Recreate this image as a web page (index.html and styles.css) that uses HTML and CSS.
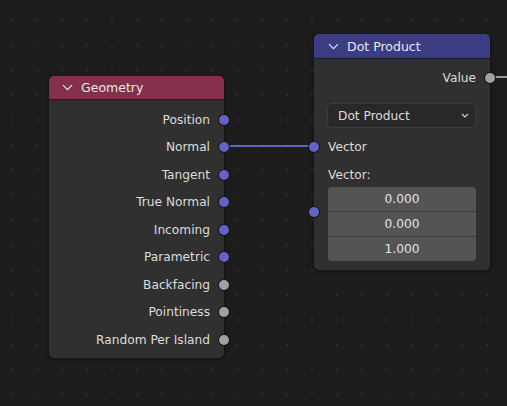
FILE: index.html
```html
<!DOCTYPE html>
<html>
<head>
<meta charset="utf-8">
<link rel="stylesheet" href="styles.css">
</head>
<body>
<div class="canvas">
  <svg class="links" width="507" height="406" viewBox="0 0 507 406">
    <line x1="224" y1="146" x2="314" y2="146" stroke="#6363c7" stroke-width="2"/>
    <line x1="490" y1="77" x2="507" y2="77" stroke="#9a9a9a" stroke-width="2"/>
  </svg>

  <div class="node node-geometry">
    <div class="node-header header-input">
      <svg class="chev" width="11" height="7" viewBox="0 0 11 7"><path d="M1 1.2 L5.5 5.7 L10 1.2" fill="none" stroke="#e6e6e6" stroke-width="1.2"/></svg>
      <span>Geometry</span>
    </div>
    <div class="node-body geo-body">
      <div class="out-row"><span>Position</span><i class="sock sock-vec"></i></div>
      <div class="out-row"><span>Normal</span><i class="sock sock-vec"></i></div>
      <div class="out-row"><span>Tangent</span><i class="sock sock-vec"></i></div>
      <div class="out-row"><span>True Normal</span><i class="sock sock-vec"></i></div>
      <div class="out-row"><span>Incoming</span><i class="sock sock-vec"></i></div>
      <div class="out-row"><span>Parametric</span><i class="sock sock-vec"></i></div>
      <div class="out-row"><span>Backfacing</span><i class="sock sock-float"></i></div>
      <div class="out-row"><span>Pointiness</span><i class="sock sock-float"></i></div>
      <div class="out-row"><span>Random Per Island</span><i class="sock sock-float"></i></div>
    </div>
  </div>

  <div class="node node-dot">
    <div class="node-header header-vector">
      <svg class="chev" width="11" height="7" viewBox="0 0 11 7"><path d="M1 1.2 L5.5 5.7 L10 1.2" fill="none" stroke="#e6e6e6" stroke-width="1.2"/></svg>
      <span>Dot Product</span>
    </div>
    <div class="node-body dot-body">
      <div class="out-row value-row"><span>Value</span><i class="sock sock-float"></i></div>
      <div class="dropdown">
        <span>Dot Product</span>
        <svg width="8" height="5" viewBox="0 0 8 5"><path d="M1 1 L4 4 L7 1" fill="none" stroke="#d0d0d0" stroke-width="1.2"/></svg>
      </div>
      <div class="in-row"><i class="sock sock-vec"></i><span>Vector</span></div>
      <div class="label-row">Vector:</div>
      <div class="vec-field">
        <i class="sock sock-vec field-sock"></i>
        <div class="vec-cell">0.000</div>
        <div class="vec-cell">0.000</div>
        <div class="vec-cell">1.000</div>
      </div>
    </div>
  </div>
</div>
</body>
</html>
```
FILE: styles.css
```css
html, body {
  margin: 0;
  padding: 0;
}
body {
  width: 507px;
  height: 406px;
  overflow: hidden;
  background-color: #1d1d1d;
  font-family: "DejaVu Sans", sans-serif;
  font-size: 12.2px;
  color: #dcdcdc;
}
.canvas {
  position: relative;
  width: 507px;
  height: 406px;
  background-image: radial-gradient(circle at 1px 1px, #2d2d2d 1.3px, transparent 1.5px);
  background-size: 25px 25px;
  background-position: 11px 19px;
}
.links {
  position: absolute;
  left: 0;
  top: 0;
}
.node {
  position: absolute;
  background: #303030;
  border-radius: 5px;
  box-shadow: 0 0 0 1px #161616, 0 1px 6px rgba(0, 0, 0, 0.45);
  display: flex;
  flex-direction: column;
}
.node-geometry {
  left: 49px;
  top: 76px;
  width: 175px;
  height: 282px;
}
.node-dot {
  left: 314px;
  top: 34px;
  width: 176px;
  height: 236px;
}
.node-header {
  display: flex;
  align-items: center;
  border-radius: 5px 5px 0 0;
  border-bottom: 1px solid #1c1c1c;
  color: #e8e8e8;
  font-size: 12.5px;
  flex: none;
}
.header-input {
  background: #85304b;
  height: 23px;
}
.header-vector {
  background: #3c3c85;
  height: 24px;
}
.chev {
  margin-left: 13px;
  margin-right: 8px;
  flex: none;
}
.node-dot .chev {
  margin-left: 14px;
}
.node-body {
  position: relative;
  display: flex;
  flex-direction: column;
}
.geo-body {
  padding-top: 6px;
}
.out-row {
  position: relative;
  height: 27.5px;
  display: flex;
  align-items: center;
  justify-content: flex-end;
  padding-right: 14px;
}
.sock {
  position: absolute;
  width: 10px;
  height: 10px;
  border-radius: 50%;
  box-shadow: 0 0 0 1px #141414;
  top: 50%;
  transform: translate(-50%, -50%);
}
.out-row .sock {
  left: 100%;
}
.sock-vec {
  background: #6363c7;
}
.sock-float {
  background: #a1a1a1;
}
.dot-body {
  padding-top: 7px;
}
.value-row {
  height: 24px;
}
.dropdown {
  margin: 13px 14px 0 13px;
  height: 25px;
  box-sizing: border-box;
  background: #282828;
  border: 1px solid #3a3a3a;
  border-radius: 4px;
  display: flex;
  align-items: center;
  justify-content: space-between;
  padding: 0 6px 0 10px;
}
.in-row {
  position: relative;
  margin-top: 7px;
  height: 24px;
  display: flex;
  align-items: center;
  padding-left: 14px;
}
.in-row .sock {
  left: 0;
}
.label-row {
  height: 24px;
  display: flex;
  align-items: center;
  padding-left: 14px;
  margin-top: 4px;
}
.vec-field {
  position: relative;
  margin: 0 14px 0 14px;
  display: flex;
  flex-direction: column;
  border-radius: 4px;
  background: #545454;
  overflow: visible;
}
.field-sock {
  left: -14px;
  top: 25px;
}
.vec-cell {
  height: 24px;
  display: flex;
  align-items: center;
  justify-content: center;
  color: #e6e6e6;
  border-top: 1px solid #3a3a3a;
}
.vec-cell:first-of-type {
  border-top: none;
  height: 24px;
}
```
